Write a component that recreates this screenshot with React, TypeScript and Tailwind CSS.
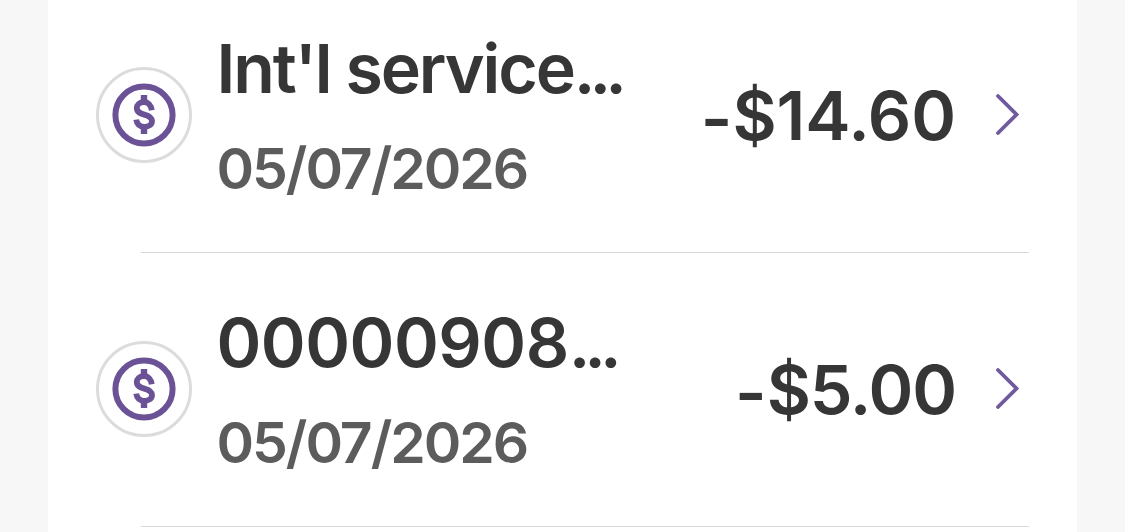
interface Transaction {
  id: number;
  title: string;
  titleClass: string;
  date: string;
  amount: string;
  amountClass: string;
}

const transactions: Transaction[] = [
  {
    id: 1,
    title: "Int'l service",
    titleClass: "tracking-[-2.1px]",
    date: "05/07/2026",
    amount: "$14.60",
    amountClass: "tracking-[-0.1px]",
  },
  {
    id: 2,
    title: "00000908",
    titleClass: "tracking-[-0.5px]",
    date: "05/07/2026",
    amount: "$5.00",
    amountClass: "tracking-[-1.1px]",
  },
];

function DollarBadge() {
  return (
    <div className="flex size-24 shrink-0 items-center justify-center rounded-full border-[3px] border-[#dcdcdc] bg-white">
      <svg width="64" height="64" viewBox="0 0 64 64" fill="none" stroke="#6b5296">
        <circle cx="32" cy="32" r="28.6" strokeWidth="6" />
        <path d="M32 12v7M32 44v7" strokeWidth="6.4" />
        <path
          d="M39.8 27.2C39 22 36 19 32 19c-4.5 0-7.2 2.8-7.2 6 0 4.3 3.7 5.5 7.5 6.6 4.2 1.2 7.7 2.7 7.7 6.4 0 3.6-3 5.8-7.7 5.8-4.3 0-7.3-2.3-8.1-7.2"
          strokeWidth="5.8"
        />
      </svg>
    </div>
  );
}

function Chevron() {
  return (
    <svg
      width="26"
      height="42"
      viewBox="0 0 26 42"
      fill="none"
      stroke="#6f5a9e"
      strokeWidth="3.8"
      strokeLinecap="round"
      className="shrink-0"
    >
      <path d="M3 3 21.5 21.5 3 40" />
    </svg>
  );
}

function TransactionRow({
  title,
  titleClass,
  date,
  amount,
  amountClass,
}: Transaction) {
  return (
    <li className="h-[274px] px-12">
      <div className="flex h-[273px] items-start pt-[22px]">
        <div className="mt-[66px]">
          <DollarBadge />
        </div>
        <div className="ml-[24.5px] mt-[19px] flex-1">
          <p className="whitespace-nowrap text-[68px] font-semibold leading-[96px] text-[#363636]">
            <span className={titleClass}>{title}</span>
            <span className="tracking-[-6px]">...</span>
          </p>
          <p className="mt-[5px] whitespace-nowrap text-[57px] font-[560] leading-[96px] tracking-[-2.05px] text-[#5c5c5c]">
            {date}
          </p>
        </div>
        <p className="mt-[66px] whitespace-nowrap text-[68px] font-semibold leading-[96px] text-[#363636]">
          <span className="relative top-[3px]">-</span>
          <span className={amountClass}>{amount}</span>
        </p>
        <div className="ml-[39px] mr-2 mt-[92px]">
          <Chevron />
        </div>
      </div>
      <div className="ml-[45px] h-px bg-[#d8d8d8]" />
    </li>
  );
}

export default function App() {
  return (
    <div className="h-[532px] overflow-hidden bg-[#f7f7f7] px-12 font-['Inter',sans-serif]">
      <ul className="-mt-[21px] h-[553px] bg-white">
        {transactions.map((item) => (
          <TransactionRow key={item.id} {...item} />
        ))}
      </ul>
    </div>
  );
}
